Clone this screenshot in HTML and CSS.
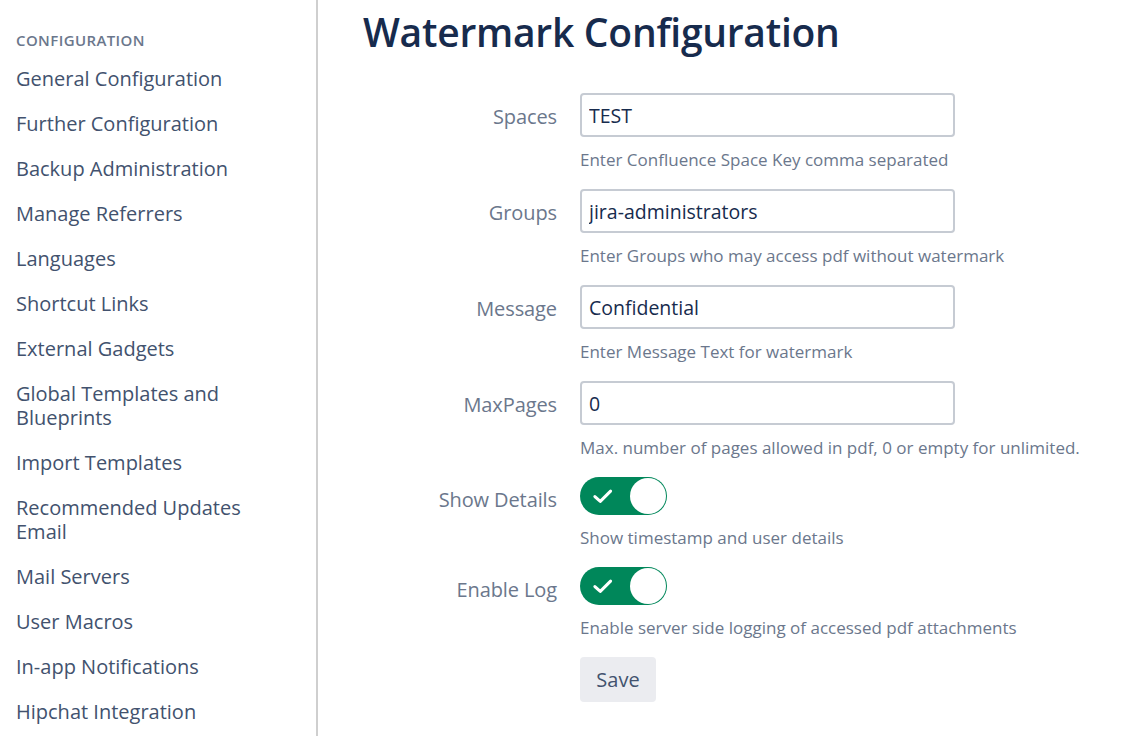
FILE: index.html
```html
<!DOCTYPE html>
<html lang="en">
<head>
<meta charset="utf-8">
<title>Watermark Configuration</title>
<link rel="stylesheet" href="styles.css">
</head>
<body>
<div class="page">
  <aside class="sidebar">
    <div class="side-heading">CONFIGURATION</div>
    <ul class="nav">
      <li>General Configuration</li>
      <li>Further Configuration</li>
      <li>Backup Administration</li>
      <li>Manage Referrers</li>
      <li>Languages</li>
      <li>Shortcut Links</li>
      <li>External Gadgets</li>
      <li>Global Templates and<br>Blueprints</li>
      <li>Import Templates</li>
      <li>Recommended Updates<br>Email</li>
      <li>Mail Servers</li>
      <li>User Macros</li>
      <li>In-app Notifications</li>
      <li>Hipchat Integration</li>
    </ul>
  </aside>
  <main class="content">
    <h1 class="title">Watermark Configuration</h1>
    <form class="form">
      <div class="row">
        <label class="label">Spaces</label>
        <div class="field">
          <input class="input" type="text" value="TEST">
          <div class="help">Enter Confluence Space Key comma separated</div>
        </div>
      </div>
      <div class="row">
        <label class="label">Groups</label>
        <div class="field">
          <input class="input" type="text" value="jira-administrators">
          <div class="help">Enter Groups who may access pdf without watermark</div>
        </div>
      </div>
      <div class="row">
        <label class="label">Message</label>
        <div class="field">
          <input class="input" type="text" value="Confidential">
          <div class="help">Enter Message Text for watermark</div>
        </div>
      </div>
      <div class="row">
        <label class="label">MaxPages</label>
        <div class="field">
          <input class="input" type="text" value="0">
          <div class="help">Max. number of pages allowed in pdf, 0 or empty for unlimited.</div>
        </div>
      </div>
      <div class="row row-toggle">
        <label class="label">Show Details</label>
        <div class="field">
          <div class="toggle">
            <svg class="check" viewBox="0 0 24 24" width="26" height="26"><polyline points="4.5,12.5 9.5,17 19,7.5" fill="none" stroke="#fff" stroke-width="2.8" stroke-linecap="round" stroke-linejoin="round"/></svg>
            <span class="knob"></span>
          </div>
          <div class="help">Show timestamp and user details</div>
        </div>
      </div>
      <div class="row row-toggle">
        <label class="label">Enable Log</label>
        <div class="field">
          <div class="toggle">
            <svg class="check" viewBox="0 0 24 24" width="26" height="26"><polyline points="4.5,12.5 9.5,17 19,7.5" fill="none" stroke="#fff" stroke-width="2.8" stroke-linecap="round" stroke-linejoin="round"/></svg>
            <span class="knob"></span>
          </div>
          <div class="help">Enable server side logging of accessed pdf attachments</div>
        </div>
      </div>
      <div class="row">
        <span class="label"></span>
        <div class="field">
          <button class="btn" type="button">Save</button>
        </div>
      </div>
    </form>
  </main>
</div>
</body>
</html>
```
FILE: styles.css
```css
html, body {
  margin: 0;
  padding: 0;
  background: #fff;
}
body {
  font-family: "Open Sans", "Noto Sans", sans-serif;
  color: #172b4d;
  height: 736px;
  overflow: hidden;
}
.page {
  display: flex;
  height: 736px;
}
.sidebar {
  width: 300px;
  padding-left: 16px;
  padding-top: 30px;
  border-right: 2px solid #cfcfcf;
  flex-shrink: 0;
}
.side-heading {
  font-size: 15px;
  line-height: 20px;
  font-weight: 600;
  color: #6b778c;
  margin-bottom: 17px;
  letter-spacing: 0.4px;
}
.nav {
  list-style: none;
  margin: 0;
  padding: 0;
}
.nav li {
  font-size: 20px;
  line-height: 24px;
  color: #42526e;
  margin-bottom: 21px;
}
.content {
  padding-left: 45px;
  padding-top: 8px;
  flex: 1;
}
.title {
  margin: 0;
  font-size: 39px;
  line-height: 48px;
  font-weight: 600;
  color: #172b4d;
  letter-spacing: -0.25px;
}
.form {
  margin-top: 37px;
}
.row {
  display: flex;
  align-items: flex-start;
  margin-bottom: 19px;
}
.label {
  width: 194px;
  text-align: right;
  font-size: 20px;
  line-height: 44px;
  margin-top: 2px;
  color: #6b778c;
  margin-right: 23px;
  flex-shrink: 0;
  letter-spacing: -0.1px;
}
.row-toggle .label {
  margin-top: 1px;
}
.field {
  display: flex;
  flex-direction: column;
}
.input {
  width: 375px;
  height: 44px;
  box-sizing: border-box;
  border: 2px solid #c6cbd3;
  border-radius: 4px;
  padding: 0 7px;
  font-family: inherit;
  font-size: 19.5px;
  color: #172b4d;
  background: #fff;
  outline: none;
  margin: 0;
}
.help {
  margin-top: 13px;
  font-size: 17px;
  line-height: 20px;
  color: #6b778c;
}
.toggle {
  width: 87px;
  height: 38px;
  box-sizing: border-box;
  border-radius: 19px;
  background: #00875a;
  position: relative;
  display: flex;
  align-items: center;
  padding-left: 10px;
}
.check {
  display: block;
}
.knob {
  position: absolute;
  right: 1px;
  top: 1px;
  width: 36px;
  height: 36px;
  border-radius: 50%;
  background: #fff;
}
.btn {
  width: 76px;
  height: 45px;
  border: none;
  border-radius: 4px;
  background: #ebecf0;
  color: #42526e;
  font-family: inherit;
  font-size: 20px;
  padding: 0;
  cursor: pointer;
}
```
